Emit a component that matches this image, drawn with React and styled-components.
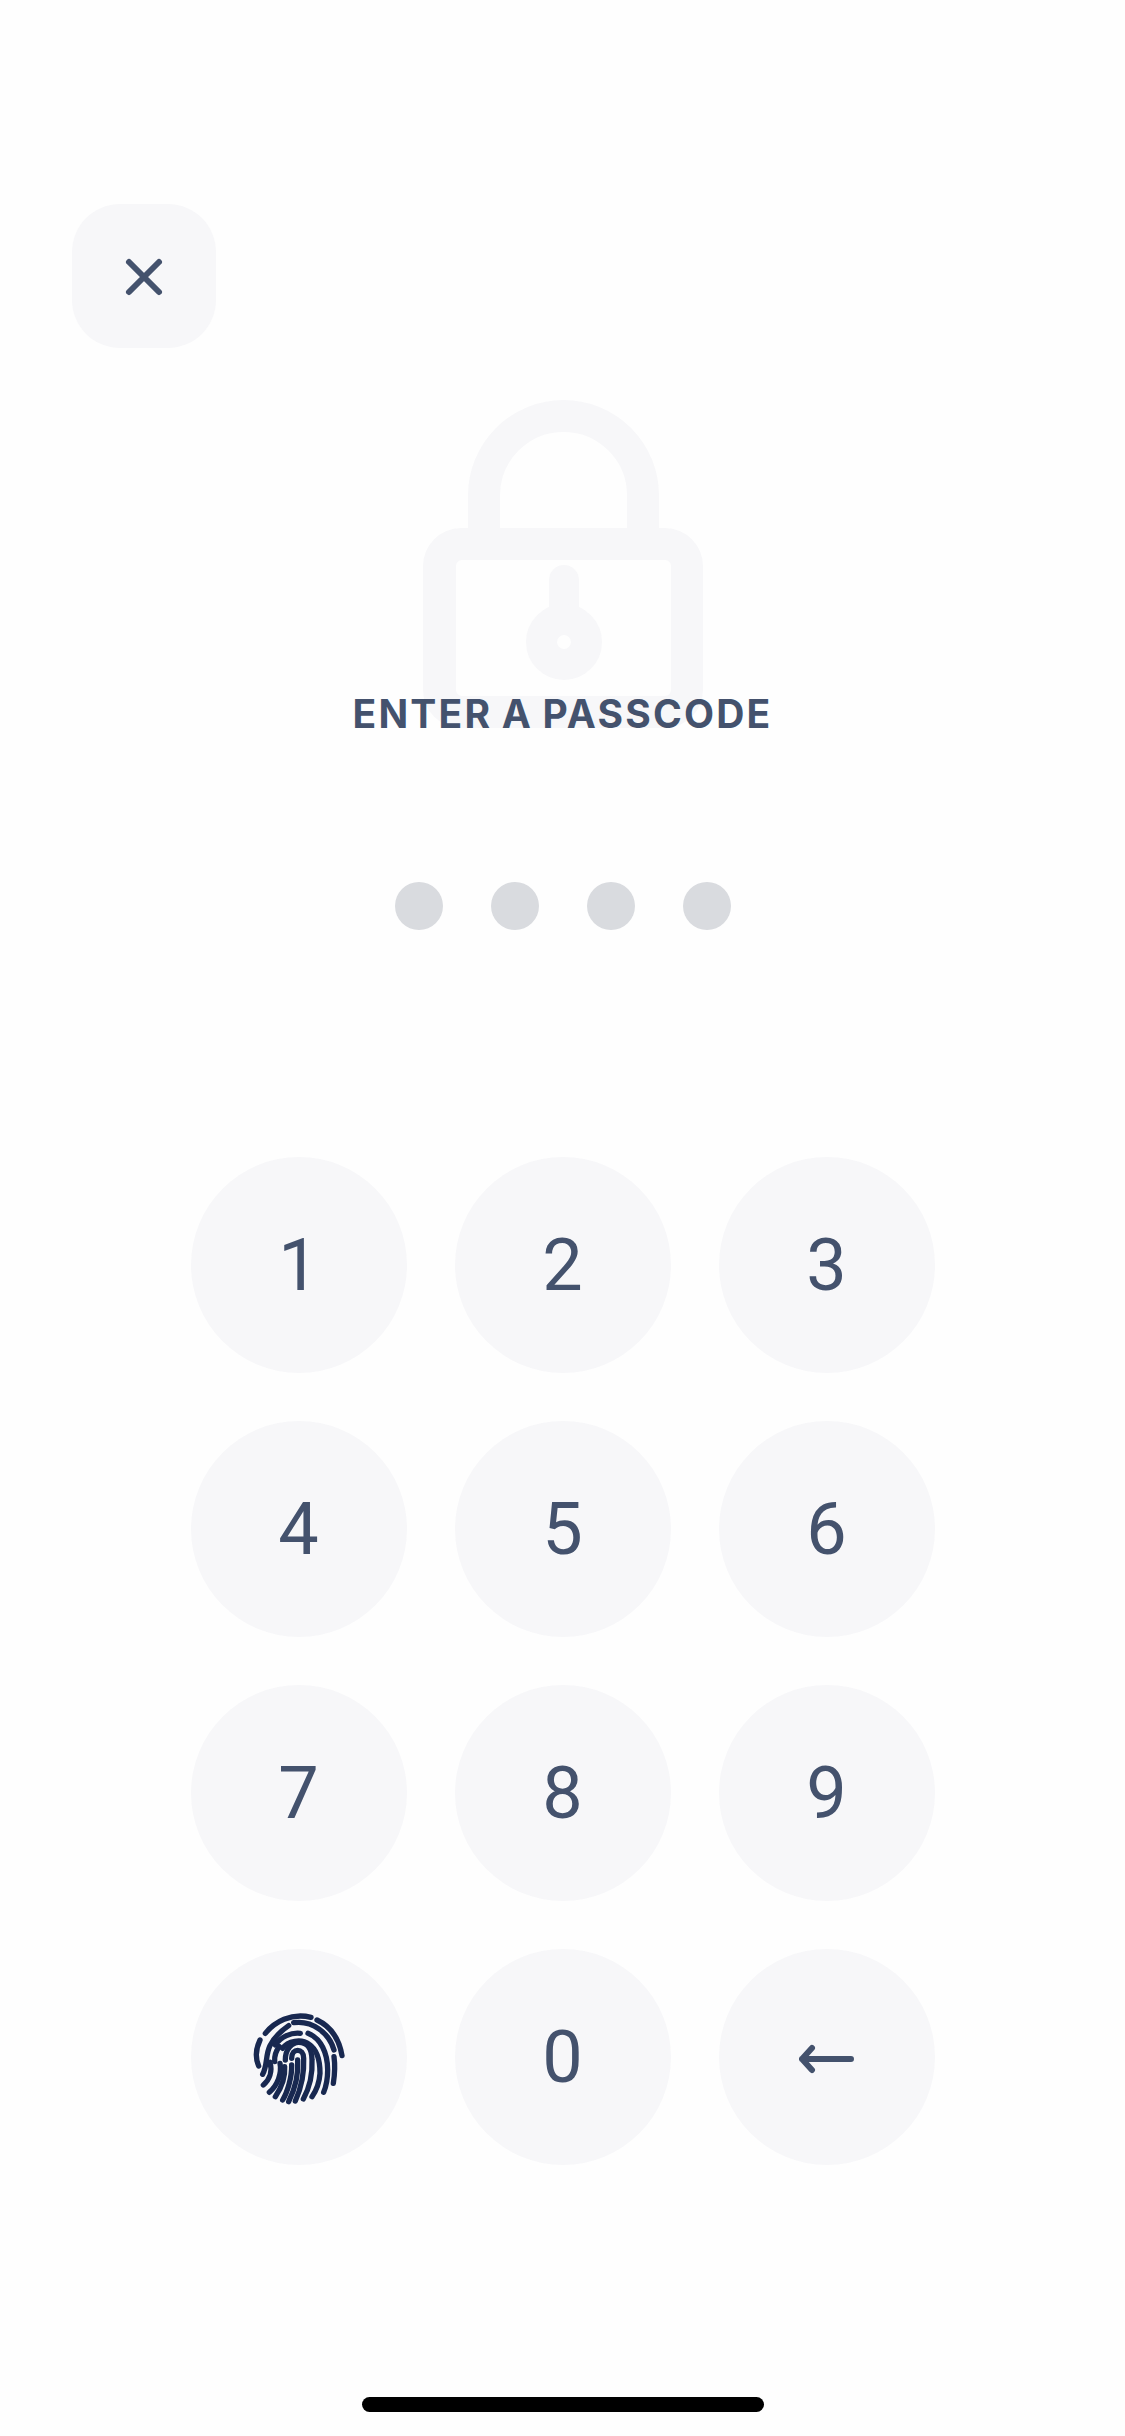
import React from "react";
import styled, { createGlobalStyle } from "styled-components";

const GlobalStyle = createGlobalStyle`
  html, body {
    margin: 0;
    padding: 0;
    background: #fefefe;
  }
`;

const Screen = styled.div`
  width: 1125px;
  height: 2436px;
  display: flex;
  flex-direction: column;
  background: #fefefe;
  overflow: hidden;
`;

const CloseButton = styled.div`
  width: 144px;
  height: 144px;
  margin: 204px 0 0 72px;
  border-radius: 48px;
  background: #f7f7f9;
  display: flex;
  align-items: center;
  justify-content: center;
`;

const Hero = styled.div`
  margin-top: 52px;
  display: flex;
  flex-direction: column;
  align-items: center;
`;

const LockArt = styled.svg`
  display: block;
  width: 280px;
  height: 328px;
`;

const Title = styled.h1`
  margin: -38px 0 0;
  position: relative;
  font-family: "Inter", "Liberation Sans", sans-serif;
  font-size: 39px;
  line-height: 48px;
  font-weight: 700;
  letter-spacing: 2.2px;
  word-spacing: -2px;
  color: #44526d;
  white-space: nowrap;
`;

const Dots = styled.div`
  margin-top: 144px;
  display: flex;
  justify-content: center;
  gap: 48px;
`;

const Dot = styled.span`
  width: 48px;
  height: 48px;
  border-radius: 50%;
  background: #d9dbdf;
`;

const Keypad = styled.div`
  margin: 227px auto 0;
  display: grid;
  grid-template-columns: repeat(3, 216px);
  grid-auto-rows: 216px;
  gap: 48px;
`;

const Key = styled.div`
  border-radius: 50%;
  background: #f7f7f9;
  display: flex;
  align-items: center;
  justify-content: center;
  font-family: "Roboto", "Liberation Sans", sans-serif;
  font-size: 72px;
  font-weight: 400;
  color: #44526d;
`;

const HomeBar = styled.div`
  width: 402px;
  height: 15px;
  margin: 232px auto 0;
  border-radius: 8px;
  background: #000;
`;

const CloseIcon = () => (
  <svg width="40" height="42" viewBox="0 0 40 42" fill="none" stroke="#44526d" strokeWidth="6" strokeLinecap="round">
    <path d="M5 7 L35 37 M35 7 L5 37" />
  </svg>
);

const BackIcon = () => (
  <svg width="55" height="34" viewBox="0 0 55 34" fill="none" stroke="#44526d" strokeWidth="6" strokeLinecap="round" strokeLinejoin="round">
    <path d="M13 8 L3 19 L13 30 M3 19 H52" />
  </svg>
);

const ridges = [
  "M58 85 C85 52 135 22 195 37",
  "M213 45 C255 65 280 105 288 152",
  "M42 105 C30 130 28 160 38 183",
  "M143 53 C200 45 250 85 264 135",
  "M264 155 C268 185 266 210 262 235",
  "M50 208 C65 180 58 150 72 122 C85 95 105 78 128 62",
  "M88 120 C105 95 135 82 163 85",
  "M186 85 C225 100 245 145 245 195 C245 220 240 245 233 262",
  "M100 125 C88 140 85 155 86 170",
  "M72 172 C80 200 70 225 52 240",
  "M110 130 C125 108 165 100 190 118 C215 135 222 170 222 205 C220 235 212 255 198 275",
  "M102 175 C108 205 95 240 70 262",
  "M118 165 C118 130 140 112 158 112 C185 112 198 135 198 165 C200 205 192 245 172 282",
  "M116 185 C118 215 105 250 88 275",
  "M137 160 C137 128 173 128 173 160 C175 205 165 250 148 288",
  "M137 180 C138 215 125 260 110 285",
  "M155 165 C158 205 150 245 128 290",
];

const FingerprintIcon = () => (
  <svg width="105" height="105" viewBox="0 0 315 315" fill="none" stroke="#182850" strokeWidth="16" strokeLinecap="round">
    {ridges.map((d) => (
      <path key={d} d={d} />
    ))}
  </svg>
);

const LockIcon = () => (
  <LockArt viewBox="0 0 280 328">
    <path d="M61 128 V95.500 A79.500 79.500 0 0 1 220 95.500 V128" fill="none" stroke="#f7f7f9" strokeWidth="32" />
    <path
      fillRule="evenodd"
      fill="#f7f7f9"
      d="M38 128 H242 A38 38 0 0 1 280 166 V290 A38 38 0 0 1 242 328 H38 A38 38 0 0 1 0 290 V166 A38 38 0 0 1 38 128 Z
         M39 160 A6 6 0 0 0 33 166 V290 A6 6 0 0 0 39 296 H242 A6 6 0 0 0 248 290 V166 A6 6 0 0 0 242 160 Z"
    />
    <path d="M141 180 V212" fill="none" stroke="#f7f7f9" strokeWidth="30" strokeLinecap="round" />
    <circle cx="141" cy="242" r="22.500" fill="none" stroke="#f7f7f9" strokeWidth="31" />
  </LockArt>
);

const keys = ["1", "2", "3", "4", "5", "6", "7", "8", "9", "finger", "0", "back"];

const App = () => {
  return (
    <Screen>
      <GlobalStyle />
      <CloseButton>
        <CloseIcon />
      </CloseButton>
      <Hero>
        <LockIcon />
        <Title>ENTER A PASSCODE</Title>
      </Hero>
      <Dots>
        <Dot />
        <Dot />
        <Dot />
        <Dot />
      </Dots>
      <Keypad>
        {keys.map((k) => (
          <Key key={k}>
            {k === "finger" ? <FingerprintIcon /> : k === "back" ? <BackIcon /> : k}
          </Key>
        ))}
      </Keypad>
      <HomeBar />
    </Screen>
  );
};

export default App;
